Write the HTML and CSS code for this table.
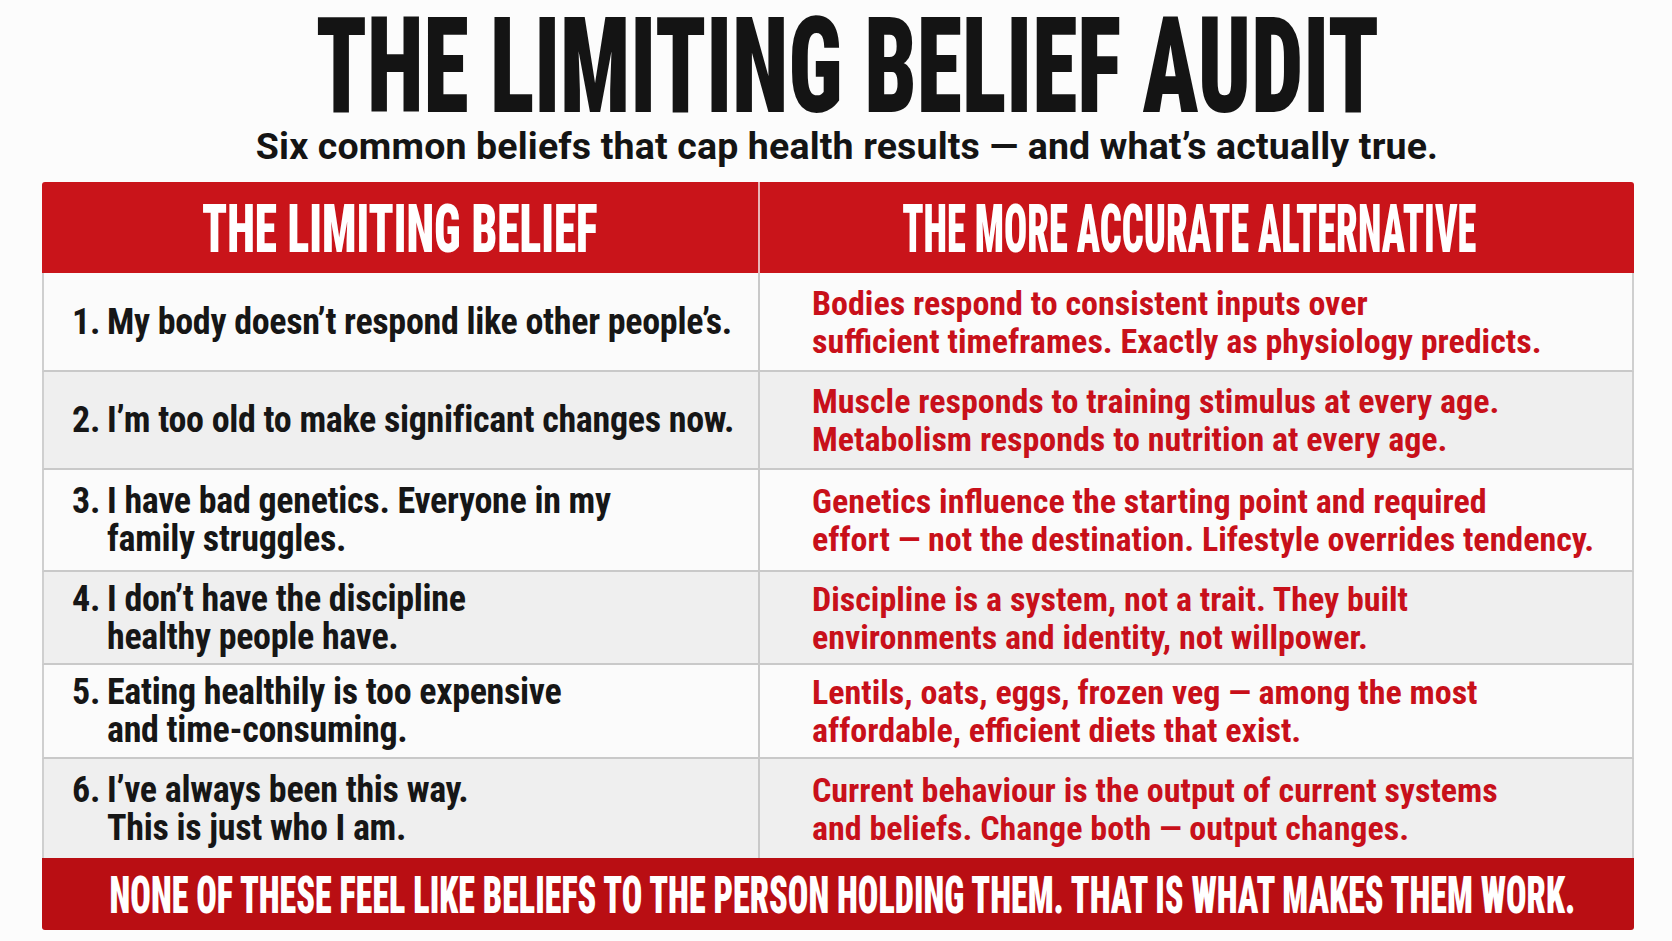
FILE: index.html
```html
<!DOCTYPE html>
<html lang="en">
<head>
<meta charset="utf-8">
<title>The Limiting Belief Audit</title>
<link rel="stylesheet" href="styles.css">
</head>
<body>
<div class="page">
  <header class="top">
    <h1 class="title"><span class="squeeze title-text">THE LIMITING BELIEF AUDIT</span></h1>
    <p class="subtitle">Six common beliefs that cap health results — and what’s actually true.</p>
  </header>

  <div class="audit">
    <div class="head-cell head-left"><span class="squeeze head-text hl">THE LIMITING BELIEF</span></div>
    <div class="head-cell head-right"><span class="squeeze head-text hr">THE MORE ACCURATE ALTERNATIVE</span></div>

    <div class="cell belief light"><div class="item"><span class="num">1.</span><span class="btext">My body doesn’t respond like other people’s.</span></div></div>
    <div class="cell truth light"><p>Bodies respond to consistent inputs over<br>sufficient timeframes. Exactly as physiology predicts.</p></div>

    <div class="cell belief shade"><div class="item"><span class="num">2.</span><span class="btext">I’m too old to make significant changes now.</span></div></div>
    <div class="cell truth shade"><p>Muscle responds to training stimulus at every age.<br>Metabolism responds to nutrition at every age.</p></div>

    <div class="cell belief light"><div class="item"><span class="num">3.</span><span class="btext">I have bad genetics. Everyone in my<br>family struggles.</span></div></div>
    <div class="cell truth light"><p>Genetics influence the starting point and required<br>effort — not the destination. Lifestyle overrides tendency.</p></div>

    <div class="cell belief shade"><div class="item"><span class="num">4.</span><span class="btext">I don’t have the discipline<br>healthy people have.</span></div></div>
    <div class="cell truth shade"><p>Discipline is a system, not a trait. They built<br>environments and identity, not willpower.</p></div>

    <div class="cell belief light"><div class="item"><span class="num">5.</span><span class="btext">Eating healthily is too expensive<br>and time-consuming.</span></div></div>
    <div class="cell truth light"><p>Lentils, oats, eggs, frozen veg — among the most<br>affordable, efficient diets that exist.</p></div>

    <div class="cell belief shade last"><div class="item"><span class="num">6.</span><span class="btext">I’ve always been this way.<br>This is just who I am.</span></div></div>
    <div class="cell truth shade last"><p>Current behaviour is the output of current systems<br>and beliefs. Change both — output changes.</p></div>

    <div class="foot"><span class="squeeze foot-text">NONE OF THESE FEEL LIKE BELIEFS TO THE PERSON HOLDING THEM. THAT IS WHAT MAKES THEM WORK.</span></div>
  </div>
</div>
</body>
</html>
```
FILE: styles.css
```css
* { box-sizing: border-box; }

html, body {
  margin: 0;
  padding: 0;
  background: #fcfcfc;
}

body {
  width: 1672px;
  height: 941px;
  overflow: hidden;
  font-family: "Roboto", "Liberation Sans", sans-serif;
  color: #151515;
}

.page {
  display: flex;
  flex-direction: column;
}

.top {
  display: flex;
  flex-direction: column;
  align-items: center;
  padding-top: 8px;
  padding-left: 22px;
}

.title {
  margin: 0;
  height: 118px;
  line-height: 118px;
  font-size: 134px;
  font-weight: 900;
  font-stretch: 75%;
  color: #141414;
  display: flex;
  justify-content: center;
  white-space: nowrap;
  width: 100%;
}

.squeeze {
  display: inline-block;
  white-space: nowrap;
  transform-origin: center center;
}

.title-text { transform: scaleX(0.69); }

.subtitle {
  margin: 0;
  font-size: 37.5px;
  line-height: 40px;
  font-weight: 700;
  font-stretch: 100%;
  letter-spacing: 0.15px;
  color: #141414;
}

.audit {
  margin: 16px 0 0 42px;
  width: 1592px;
  display: grid;
  grid-template-columns: 718px 874px;
  grid-template-rows: 91px 99px 98px 102px 93px 94px 99px 72px;
  border-radius: 3px;
  overflow: hidden;
}

.head-cell {
  background: #c9141a;
  color: #ffffff;
  display: flex;
  align-items: center;
  justify-content: center;
  font-size: 67px;
  font-weight: 900;
  font-stretch: 75%;
  line-height: 1;
}

.head-left { border-right: 2px solid #e9b4b6; }
.head-right { padding-right: 16px; }

.head-text { padding-top: 4px; }
.hl { transform: scaleX(0.678); }
.hr { transform: scaleX(0.575); }

.cell {
  display: flex;
  align-items: center;
  border-bottom: 2px solid #c9c9c9;
}

.cell.last { border-bottom: none; }

.light { background: #fbfbfb; }
.shade { background: #efefef; }

.belief {
  padding-left: 28px;
  border-left: 2px solid #cfcfcf;
  border-right: 2px solid #c9c9c9;
  font-size: 36px;
  line-height: 38px;
  font-weight: 700;
  font-stretch: 75%;
  letter-spacing: -0.3px;
  color: #161616;
}

.item {
  display: flex;
  align-items: baseline;
}

.num { flex: 0 0 35px; }

.btext { display: block; }

.truth {
  padding-left: 52px;
  border-right: 2px solid #cfcfcf;
}

.truth p {
  margin: 0;
  font-size: 34px;
  line-height: 38px;
  font-weight: 700;
  font-stretch: 75%;
  color: #c8101a;
}

.foot {
  grid-column: 1 / 3;
  background: #b90e13;
  color: #ffffff;
  display: flex;
  align-items: center;
  justify-content: center;
  padding-left: 8px;
  font-size: 51px;
  font-weight: 900;
  font-stretch: 75%;
  line-height: 1;
}

.foot-text { transform: scaleX(0.669); padding-top: 2px; }
```
